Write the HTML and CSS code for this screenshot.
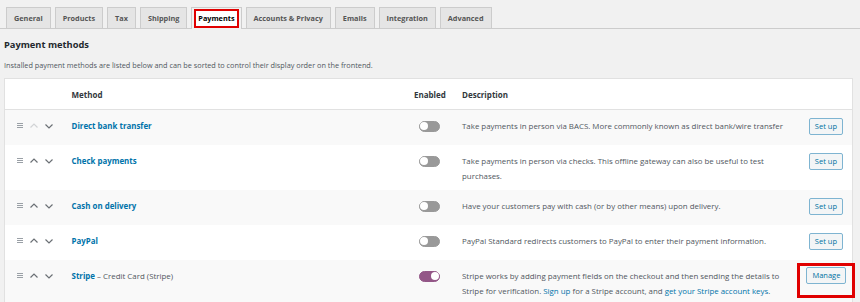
FILE: index.html
```html
<!DOCTYPE html>
<html>
<head>
<meta charset="utf-8">
<link rel="stylesheet" href="styles.css">
</head>
<body>
<nav class="tabs">
  <a class="tab">General</a>
  <a class="tab">Products</a>
  <a class="tab">Tax</a>
  <a class="tab">Shipping</a>
  <a class="tab tab-active"><span class="mark">Payments</span></a>
  <a class="tab">Accounts &amp; Privacy</a>
  <a class="tab">Emails</a>
  <a class="tab">Integration</a>
  <a class="tab">Advanced</a>
</nav>
<h2 class="title">Payment methods</h2>
<p class="intro">Installed payment methods are listed below and can be sorted to control their display order on the frontend.</p>
<table class="methods">
  <colgroup>
    <col class="c-sort"><col class="c-name"><col class="c-status"><col class="c-desc"><col class="c-action">
  </colgroup>
  <thead>
    <tr><th></th><th>Method</th><th>Enabled</th><th>Description</th><th></th></tr>
  </thead>
  <tbody>
    <tr class="alt">
      <td class="sort">
        <svg class="ico" width="40" height="8" viewBox="0 0 40 8"><path d="M0 1.5h6M0 3.5h6M0 5.5h6" stroke="#9aa0a6" stroke-width="1.2"/><path d="M13.5 5.5l3.5-3.5 3.5 3.5" fill="none" stroke="#d2d4d6" stroke-width="1.2"/><path d="M28.5 2.5l3.5 3.5 3.5-3.5" fill="none" stroke="#6b7075" stroke-width="1.2"/></svg>
      </td>
      <td class="name"><a class="link">Direct bank transfer</a></td>
      <td class="status"><span class="toggle"></span></td>
      <td class="desc">Take payments in person via BACS. More commonly known as direct bank/wire transfer</td>
      <td class="action"><button class="btn">Set up</button></td>
    </tr>
    <tr>
      <td class="sort">
        <svg class="ico" width="40" height="8" viewBox="0 0 40 8"><path d="M0 1.5h6M0 3.5h6M0 5.5h6" stroke="#9aa0a6" stroke-width="1.2"/><path d="M13.5 5.5l3.5-3.5 3.5 3.5" fill="none" stroke="#6b7075" stroke-width="1.2"/><path d="M28.5 2.5l3.5 3.5 3.5-3.5" fill="none" stroke="#6b7075" stroke-width="1.2"/></svg>
      </td>
      <td class="name"><a class="link">Check payments</a></td>
      <td class="status"><span class="toggle"></span></td>
      <td class="desc">Take payments in person via checks. This offline gateway can also be useful to test purchases.</td>
      <td class="action"><button class="btn">Set up</button></td>
    </tr>
    <tr class="alt">
      <td class="sort">
        <svg class="ico" width="40" height="8" viewBox="0 0 40 8"><path d="M0 1.5h6M0 3.5h6M0 5.5h6" stroke="#9aa0a6" stroke-width="1.2"/><path d="M13.5 5.5l3.5-3.5 3.5 3.5" fill="none" stroke="#6b7075" stroke-width="1.2"/><path d="M28.5 2.5l3.5 3.5 3.5-3.5" fill="none" stroke="#6b7075" stroke-width="1.2"/></svg>
      </td>
      <td class="name"><a class="link">Cash on delivery</a></td>
      <td class="status"><span class="toggle"></span></td>
      <td class="desc">Have your customers pay with cash (or by other means) upon delivery.</td>
      <td class="action"><button class="btn">Set up</button></td>
    </tr>
    <tr>
      <td class="sort">
        <svg class="ico" width="40" height="8" viewBox="0 0 40 8"><path d="M0 1.5h6M0 3.5h6M0 5.5h6" stroke="#9aa0a6" stroke-width="1.2"/><path d="M13.5 5.5l3.5-3.5 3.5 3.5" fill="none" stroke="#6b7075" stroke-width="1.2"/><path d="M28.5 2.5l3.5 3.5 3.5-3.5" fill="none" stroke="#6b7075" stroke-width="1.2"/></svg>
      </td>
      <td class="name"><a class="link">PayPal</a></td>
      <td class="status"><span class="toggle"></span></td>
      <td class="desc">PayPal Standard redirects customers to PayPal to enter their payment information.</td>
      <td class="action"><button class="btn">Set up</button></td>
    </tr>
    <tr class="alt">
      <td class="sort">
        <svg class="ico" width="40" height="8" viewBox="0 0 40 8"><path d="M0 1.5h6M0 3.5h6M0 5.5h6" stroke="#9aa0a6" stroke-width="1.2"/><path d="M13.5 5.5l3.5-3.5 3.5 3.5" fill="none" stroke="#6b7075" stroke-width="1.2"/><path d="M28.5 2.5l3.5 3.5 3.5-3.5" fill="none" stroke="#6b7075" stroke-width="1.2"/></svg>
      </td>
      <td class="name"><a class="link">Stripe</a> <span class="sub">– Credit Card (Stripe)</span></td>
      <td class="status"><span class="toggle toggle-on"></span></td>
      <td class="desc">Stripe works by adding payment fields on the checkout and then sending the details to Stripe for verification. <a class="inline-link">Sign up</a> for a Stripe account, and <a class="inline-link">get your Stripe account keys</a>.</td>
      <td class="action action-marked"><span class="mark-box"><button class="btn">Manage</button></span></td>
    </tr>
  </tbody>
</table>
</body>
</html>
```

FILE: styles.css
```css
* { box-sizing: border-box; }
body {
  margin: 0;
  background: #f1f1f1;
  font-family: "Open Sans", "Noto Sans", sans-serif;
  color: #3c434a;
  overflow: hidden;
}
.tabs {
  display: flex;
  gap: 4px;
  padding: 7px 0 0 6px;
  border-bottom: 1px solid #ccc;
  height: 29px;
}
.tab {
  display: flex;
  align-items: center;
  height: 21px;
  padding: 0 7px;
  margin-bottom: -1px;
  background: #e5e5e5;
  border: 1px solid #ccc;
  border-bottom: none;
  font-size: 7.3px;
  font-weight: 700;
  color: #555;
}
.tab-active {
  background: #f1f1f1;
  height: 22px;
  padding: 0 2px;
  color: #000;
}
.mark {
  border: 2px solid #e00000;
  padding: 2px 2px;
  line-height: 11px;
  background: #fff;
}
.title {
  margin: 9px 0 0 4px;
  font-size: 9.3px;
  font-weight: 700;
  color: #23282d;
  line-height: 14px;
}
.intro {
  margin: 7px 0 0 4px;
  font-size: 7.3px;
  line-height: 12px;
  color: #50575e;
}
.methods {
  margin: 7px 0 0 4px;
  width: 849px;
  table-layout: fixed;
  border-collapse: collapse;
  border: 1px solid #e1e1e1;
  background: #fff;
  font-size: 7.9px;
}
.c-sort { width: 59px; }
.c-name { width: 342px; }
.c-status { width: 48px; }
.c-desc { width: 343px; }
.c-action { width: 55px; }
th {
  text-align: left;
  font-weight: 700;
  color: #32373c;
  height: 31px;
  padding: 0 8px;
  border-bottom: 1px solid #e1e1e1;
  font-size: 8px;
}
tr.alt td { background: #f9f9f9; }
td {
  vertical-align: top;
  padding: 9px 8px 6px;
  line-height: 15px;
  color: #50575e;
}
td.sort { padding: 12px 0 0 12px; }
.ico { display: block; }
.link, .inline-link { color: #0073aa; }
.link { font-weight: 700; font-size: 7.9px; }
.sub { font-size: 7.9px; }
td.status { padding: 11px 0 0 13px; }
.toggle {
  display: block;
  position: relative;
  width: 21px;
  height: 11px;
  border-radius: 6px;
  background: #999;
  border: 1.5px solid #999;
}
.toggle::before {
  content: "";
  position: absolute;
  left: 0;
  top: 0;
  width: 8px;
  height: 8px;
  border-radius: 50%;
  background: #fff;
}
.toggle-on { background: #935687; border-color: #935687; }
.toggle-on::before { left: auto; right: 0; }
td.action {
  padding: 8px 9px 10px 0;
  text-align: right;
}
.btn {
  display: inline-block;
  height: 17px;
  padding: 0 5px;
  border: 1px solid #7eb4d1;
  border-radius: 2px;
  background: #f3f5f6;
  color: #0071a1;
  font-family: inherit;
  font-size: 7.5px;
  line-height: 15px;
}
td.action-marked { padding: 6px 1px 0 0; }
.mark-box {
  display: inline-block;
  border: 3px solid #e00000;
  padding: 1px 6px 11px 6px;
  line-height: 0;
  margin-top: -3px;
}
```
